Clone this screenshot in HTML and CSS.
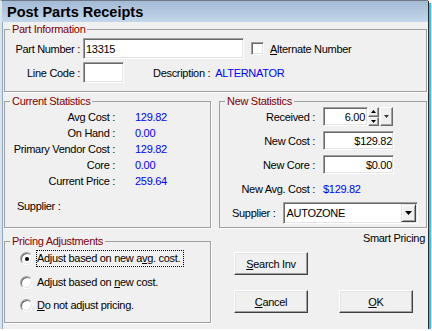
FILE: index.html
```html
<!DOCTYPE html>
<html>
<head>
<meta charset="utf-8">
<title>Post Parts Receipts</title>
<link rel="stylesheet" href="styles.css">
</head>
<body>
<div class="window">
  <div class="titlebar"><span class="title">Post Parts Receipts</span></div>
  <div class="client">
    <fieldset class="group part-info">
      <legend>Part Information</legend>
      <div class="pi-body">
        <div class="pi-row">
          <span class="pi-label">Part Number :</span>
          <div class="field part-number">13315</div>
          <span class="checkbox"></span>
          <span class="check-label"><u>A</u>lternate Number</span>
        </div>
        <div class="pi-row pi-row2">
          <span class="pi-label">Line Code :</span>
          <div class="field line-code"></div>
          <span class="desc-label">Description :</span>
          <span class="value desc-value">ALTERNATOR</span>
        </div>
      </div>
    </fieldset>

    <div class="stats-row">
      <fieldset class="group current">
        <legend>Current Statistics</legend>
        <div class="cur-body">
          <div class="cur-grid">
            <span class="cur-label">Avg Cost :</span><span class="value">129.82</span>
            <span class="cur-label">On Hand :</span><span class="value">0.00</span>
            <span class="cur-label">Primary Vendor Cost :</span><span class="value">129.82</span>
            <span class="cur-label">Core :</span><span class="value">0.00</span>
            <span class="cur-label">Current Price :</span><span class="value">259.64</span>
          </div>
          <div class="cur-supplier">Supplier :</div>
        </div>
      </fieldset>

      <fieldset class="group new">
        <legend>New Statistics</legend>
        <div class="new-body">
          <div class="new-grid">
            <span class="new-label">Received :</span>
            <div class="spin">
              <div class="field spin-input">6.00</div>
              <div class="spin-btns">
                <span class="mini-btn"><svg width="5" height="3" viewBox="0 0 5 3"><polygon points="2.5,0 5,3 0,3" fill="#000"/></svg></span>
                <span class="mini-btn"><svg width="5" height="3" viewBox="0 0 5 3"><polygon points="0,0 5,0 2.5,3" fill="#000"/></svg></span>
              </div>
              <span class="drop-btn"><svg width="5" height="3" viewBox="0 0 5 3"><polygon points="0,0 5,0 2.5,3" fill="#333"/></svg></span>
            </div>
            <span class="new-label">New Cost :</span>
            <div class="field num">$129.82</div>
            <span class="new-label">New Core :</span>
            <div class="field num">$0.00</div>
            <span class="new-label">New Avg. Cost :</span>
            <span class="value">$129.82</span>
          </div>
          <div class="new-supplier">
            <span>Supplier :</span>
            <div class="field combo">
              <span class="combo-text">AUTOZONE</span>
              <span class="combo-btn"><svg width="7" height="4" viewBox="0 0 7 4"><polygon points="0,0 7,0 3.5,4" fill="#000"/></svg></span>
            </div>
          </div>
        </div>
      </fieldset>
    </div>

    <div class="bottom-row">
      <fieldset class="group pricing">
        <legend>Pricing Adjustments</legend>
        <div class="radios">
          <div class="radio-row">
            <span class="radio"><span class="dot"></span></span>
            <span class="radio-label focus">Adjust based on new a<u>v</u>g. cost.</span>
          </div>
          <div class="radio-row">
            <span class="radio"></span>
            <span class="radio-label">Adjust based on <u>n</u>ew cost.</span>
          </div>
          <div class="radio-row">
            <span class="radio"></span>
            <span class="radio-label"><u>D</u>o not adjust pricing.</span>
          </div>
        </div>
      </fieldset>
      <div class="actions">
        <div class="smart">Smart Pricing</div>
        <button class="btn search"><u>S</u>earch Inv</button>
        <div class="btn-row">
          <button class="btn"><u>C</u>ancel</button>
          <button class="btn"><u>O</u>K</button>
        </div>
      </div>
    </div>
  </div>
</div>
</body>
</html>
```

FILE: styles.css
```css
html, body {
  margin: 0;
  padding: 0;
  background: #ffffff;
}

body {
  font-family: "Liberation Sans", Arial, sans-serif;
  font-size: 11px;
  letter-spacing: -0.3px;
  color: #000;
}

.window {
  width: 428px;
  height: 329px;
  box-sizing: border-box;
  border-top: 1px solid #6a7888;
  border-left: 2px solid #dde3ea;
  background: #f0f0f0;
  display: flex;
  flex-direction: column;
  box-shadow: 1px 1px 0 #2b2b2b, 3px 3px 0 #38bfee, 4px 4px 0 #cbeefb;
}

.titlebar {
  height: 21px;
  flex: none;
  display: flex;
  align-items: center;
  padding-left: 5px;
  background: linear-gradient(#a3bbd4, #c3d6eb);
}

.title {
  font-weight: bold;
  font-size: 14.5px;
  letter-spacing: 0;
}

.client {
  flex: 1;
  border-left: 1px solid #8ea7c2;
  padding: 1px 1px 0 1px;
  display: flex;
  flex-direction: column;
}

.group {
  margin: 0;
  padding: 0;
  min-width: 0;
  box-sizing: border-box;
  border: 1px solid #a0a0a0;
  box-shadow: 1px 1px 0 #ffffff;
}

.group legend {
  padding: 0 2px;
  margin-left: 5px;
  color: #800000;
  font-size: 11px;
  line-height: 12px;
}

.value {
  color: #0000ff;
}

.field {
  box-sizing: border-box;
  height: 21px;
  background: #fff;
  border: 1px solid;
  border-color: #a0a0a0 #ffffff #ffffff #a0a0a0;
  box-shadow: inset 1px 1px 0 #696969, inset -1px -1px 0 #e3e3e3;
  padding: 0 2px;
  display: flex;
  align-items: center;
  white-space: nowrap;
}

/* Part information */
.pi-body {
  padding: 3px 0 8px 0;
}

.pi-row {
  display: flex;
  align-items: center;
  height: 21px;
}

.pi-row2 {
  margin-top: 3px;
}

.pi-label {
  width: 75px;
  margin-right: 3px;
  text-align: right;
  white-space: nowrap;
}

.part-number {
  width: 161px;
}

.line-code {
  width: 41px;
}

.checkbox {
  width: 13px;
  height: 13px;
  box-sizing: border-box;
  margin-left: 7px;
  background: #fff;
  border: 1px solid;
  border-color: #a0a0a0 #ffffff #ffffff #a0a0a0;
  box-shadow: inset 1px 1px 0 #696969, inset -1px -1px 0 #e3e3e3;
}

.check-label {
  margin-left: 6px;
}

.desc-label {
  margin-left: 29px;
}

.desc-value {
  margin-left: 5px;
}

/* statistics */
.stats-row {
  display: flex;
  gap: 8px;
  margin-top: 3px;
}

.current {
  width: 207px;
}

.new {
  width: 208px;
}

.cur-body {
  padding-top: 2px;
}

.cur-grid {
  display: grid;
  grid-template-columns: 110px auto;
  column-gap: 20px;
  grid-auto-rows: 16px;
  align-items: center;
}

.cur-label {
  text-align: right;
  white-space: nowrap;
}

.cur-supplier {
  margin-top: 9px;
  padding-left: 12px;
  line-height: 16px;
}

.new-body {
  padding-bottom: 3px;
}

.new-grid {
  display: grid;
  grid-template-columns: 95px 71px;
  grid-template-rows: 19px 19px 19px 20px;
  column-gap: 8px;
  row-gap: 5px;
  align-items: center;
}

.new-label {
  text-align: right;
  white-space: nowrap;
}

.num {
  height: 19px;
  justify-content: flex-end;
  padding-right: 1px;
}

.spin {
  display: flex;
  height: 19px;
}

.spin-input {
  width: 45px;
  height: 19px;
  justify-content: flex-end;
  padding-right: 2px;
}

.spin-btns {
  width: 11px;
  display: flex;
  flex-direction: column;
}

.mini-btn,
.drop-btn,
.combo-btn {
  box-sizing: border-box;
  background: #f0f0f0;
  border: 1px solid;
  border-color: #ffffff #696969 #696969 #ffffff;
  box-shadow: inset -1px -1px 0 #a0a0a0;
  display: flex;
  align-items: center;
  justify-content: center;
}

.mini-btn {
  flex: 1;
}

.drop-btn {
  width: 13px;
  margin-left: 1px;
}

.new-supplier {
  display: flex;
  align-items: center;
  margin-top: 3px;
  padding-left: 12px;
}

.combo {
  width: 135px;
  height: 22px;
  margin-left: 8px;
  padding: 1px 1px 1px 2px;
  justify-content: space-between;
  align-items: stretch;
}

.combo-text {
  display: flex;
  align-items: center;
}

.combo-btn {
  width: 15px;
  border-color: #e3e3e3 #404040 #404040 #e3e3e3;
  box-shadow: inset 1px 1px 0 #ffffff, inset -1px -1px 0 #a0a0a0;
}

/* bottom */
.bottom-row {
  display: flex;
  align-items: flex-start;
}

.pricing {
  width: 207px;
  margin-top: 7px;
}

.radios {
  padding: 3px 0 8px 15px;
  display: flex;
  flex-direction: column;
  gap: 6.5px;
}

.radio-row {
  display: flex;
  align-items: center;
  height: 17px;
}

.radio {
  width: 13px;
  height: 13px;
  box-sizing: border-box;
  border-radius: 50%;
  background: #fff;
  border: 1px solid;
  border-color: #a0a0a0 #ffffff #ffffff #a0a0a0;
  box-shadow: inset 1px 1px 0 #696969, inset -1px -1px 0 #e3e3e3;
  margin-right: 3px;
  display: flex;
  align-items: center;
  justify-content: center;
}

.dot {
  width: 4px;
  height: 4px;
  border-radius: 50%;
  background: #000;
}

.radio-label {
  border: 1px dotted transparent;
  padding-right: 3px;
  line-height: 15px;
  white-space: nowrap;
}

.radio-label.focus {
  border-color: #000;
}

.actions {
  flex: 1;
  margin-left: 8px;
}

.smart {
  text-align: right;
  padding-right: 2px;
  margin-top: 3px;
  line-height: 14px;
}

.btn {
  width: 74px;
  height: 23px;
  margin: 0;
  padding: 0;
  font: inherit;
  letter-spacing: inherit;
  color: #000;
  background: #f0f0f0;
  border: 1px solid;
  border-color: #ffffff #404040 #404040 #ffffff;
  box-shadow: inset -1px -1px 0 #a0a0a0, inset 1px 1px 0 #e3e3e3;
  display: block;
}

.search {
  margin-top: 7px;
  margin-left: 15px;
}

.btn-row {
  display: flex;
  gap: 31px;
  margin-top: 15px;
  padding-left: 15px;
}
```
